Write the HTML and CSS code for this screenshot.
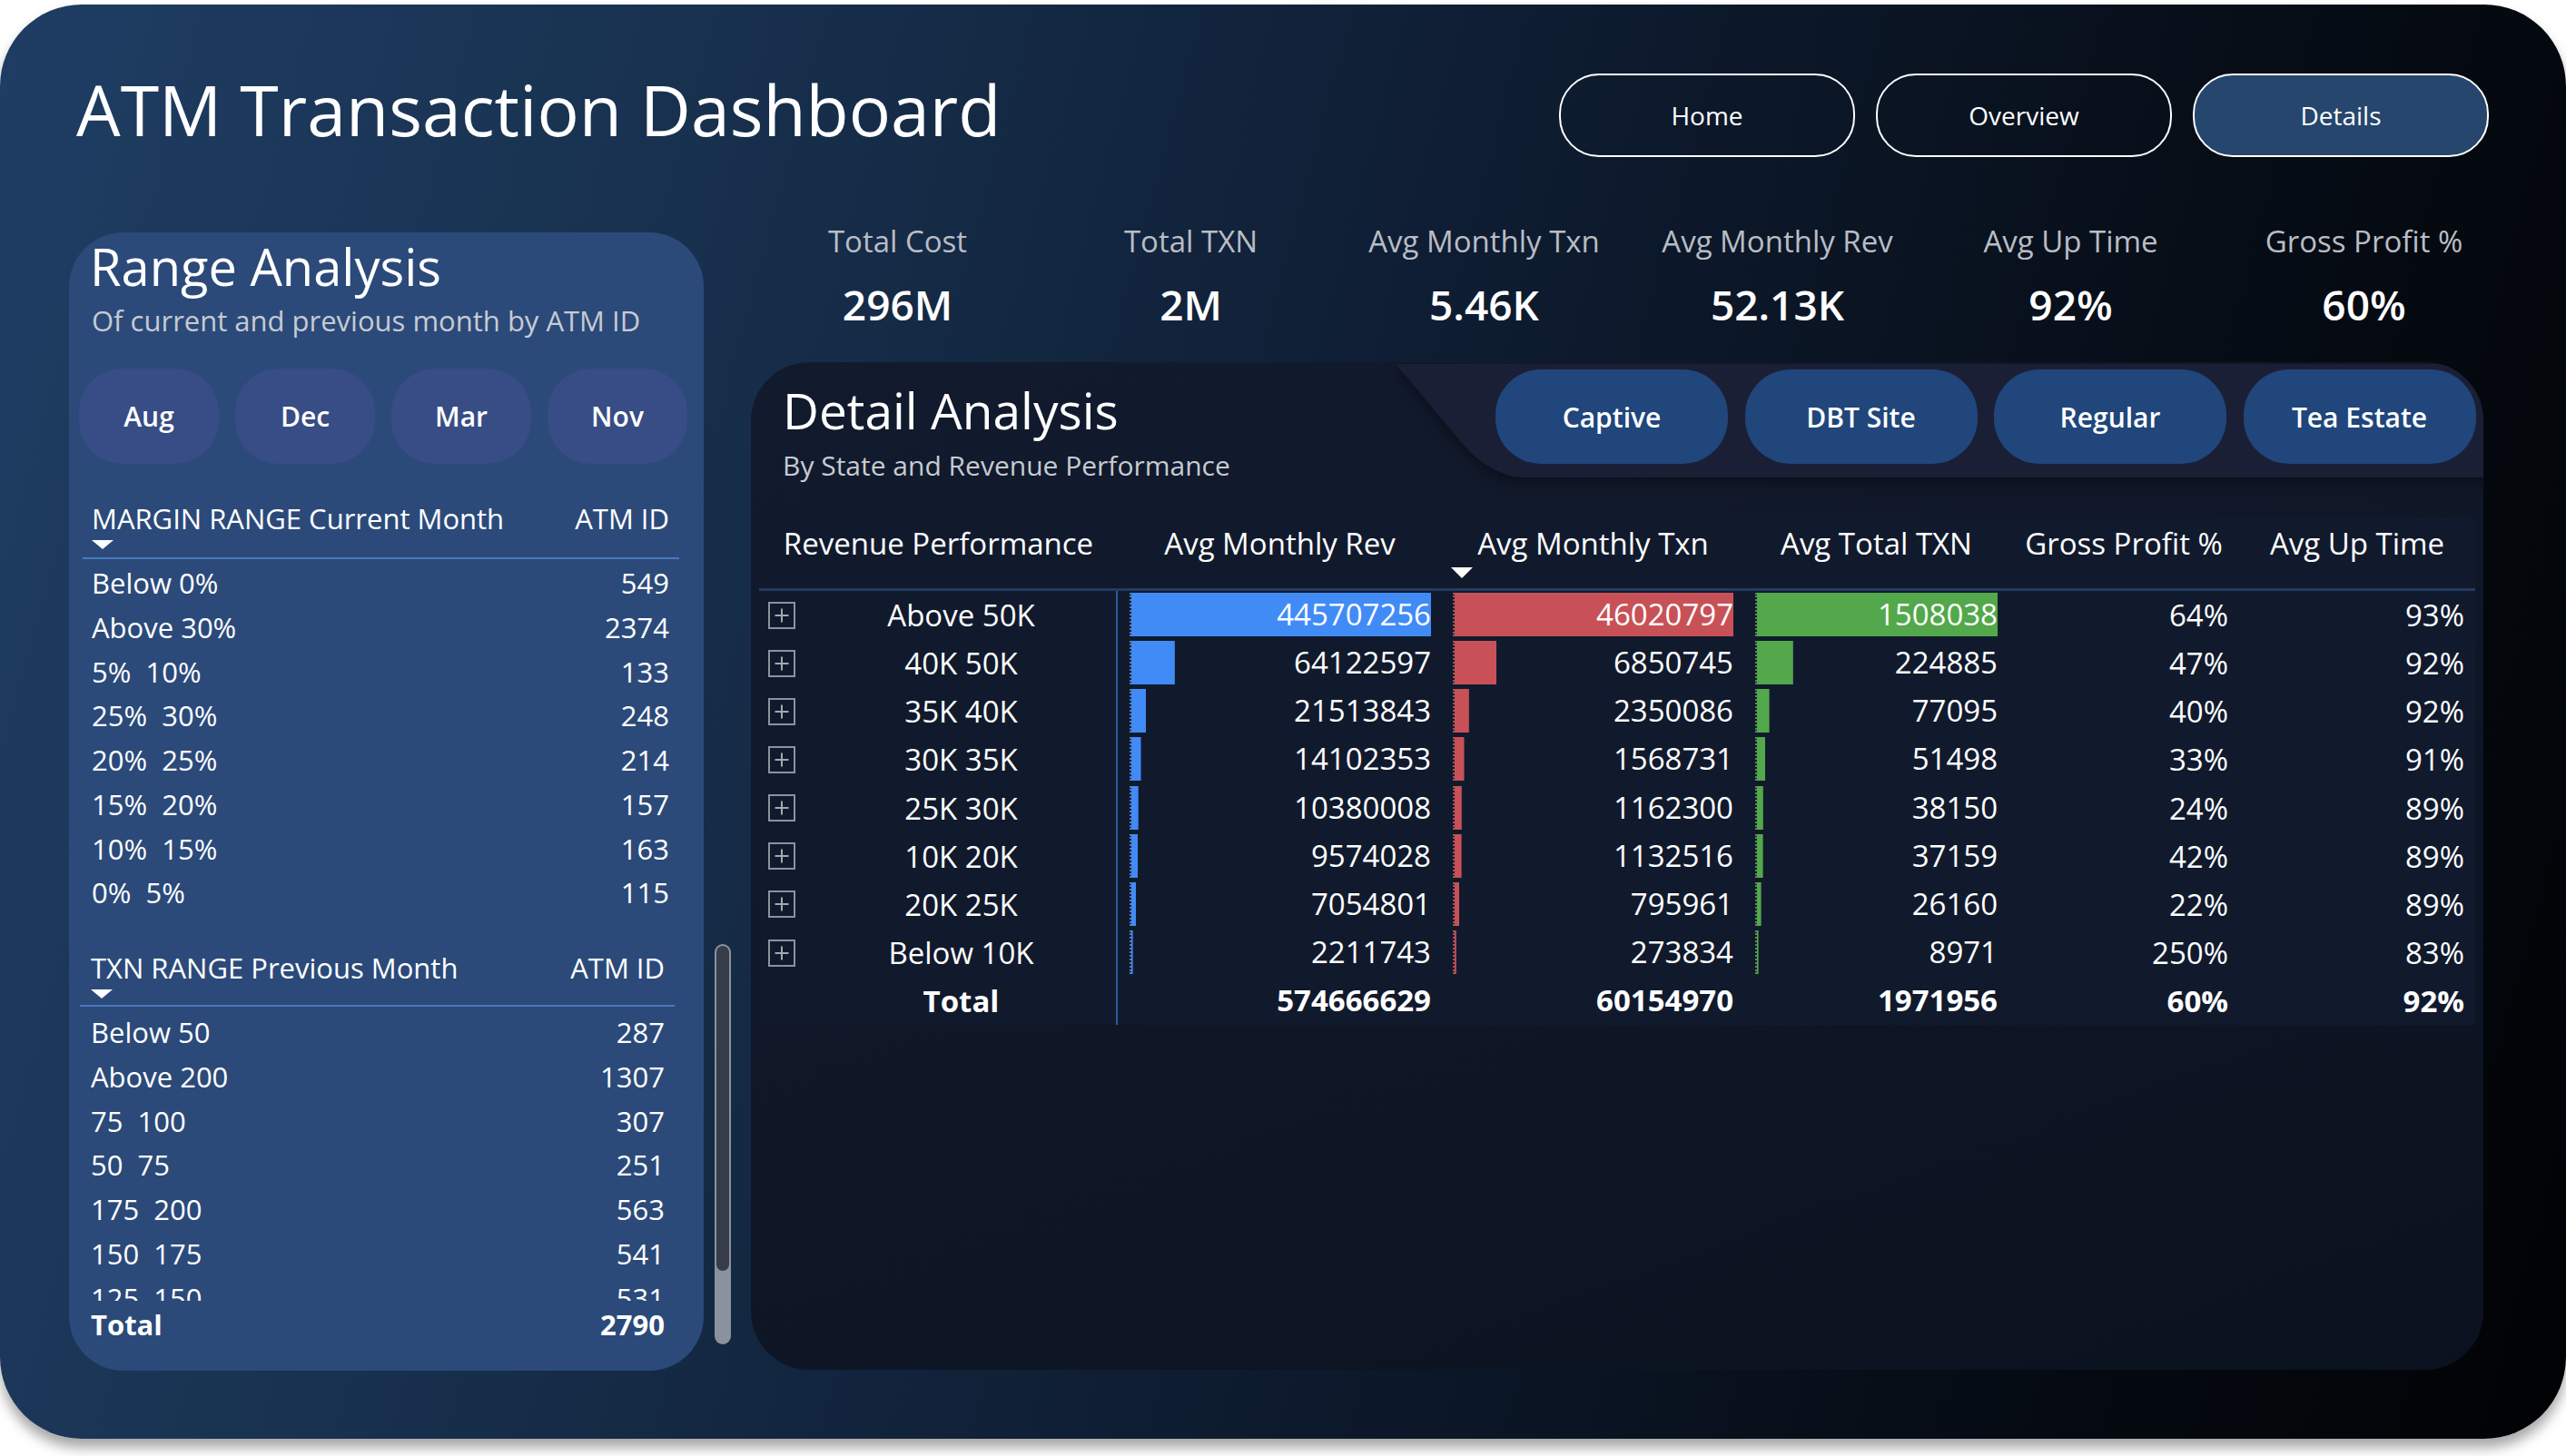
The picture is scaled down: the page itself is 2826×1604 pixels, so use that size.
FILE: index.html
```html
<!DOCTYPE html>
<html lang="en">
<head>
<meta charset="utf-8">
<title>ATM Transaction Dashboard</title>
<link rel="stylesheet" href="styles.css">
</head>
<body>
<div class="frame">
  <header class="top">
    <h1 class="title">ATM Transaction Dashboard</h1>
    <nav class="nav">
      <a class="nav-btn">Home</a>
      <a class="nav-btn">Overview</a>
      <a class="nav-btn active">Details</a>
    </nav>
  </header>

  <div class="body">
    <aside class="left-col">
      <section class="range">
        <h2 class="range-title">Range Analysis</h2>
        <p class="range-sub">Of current and previous month by ATM ID</p>
        <div class="months">
          <button class="month">Aug</button>
          <button class="month">Dec</button>
          <button class="month">Mar</button>
          <button class="month">Nov</button>
        </div>

        <div class="rt rt1">
          <div class="rt-head"><span>MARGIN RANGE Current Month</span><span>ATM ID</span></div>
          <div class="sort-arrow"></div>
          <div class="rt-line"></div>
          <div class="rt-rows">
            <div class="rt-row"><span>Below 0%</span><span>549</span></div>
            <div class="rt-row"><span>Above 30%</span><span>2374</span></div>
            <div class="rt-row"><span>5%  10%</span><span>133</span></div>
            <div class="rt-row"><span>25%  30%</span><span>248</span></div>
            <div class="rt-row"><span>20%  25%</span><span>214</span></div>
            <div class="rt-row"><span>15%  20%</span><span>157</span></div>
            <div class="rt-row"><span>10%  15%</span><span>163</span></div>
            <div class="rt-row"><span>0%  5%</span><span>115</span></div>
          </div>
        </div>

        <div class="rt rt2">
          <div class="rt-head"><span>TXN RANGE Previous Month</span><span>ATM ID</span></div>
          <div class="sort-arrow"></div>
          <div class="rt-line"></div>
          <div class="rt-rows clip">
            <div class="rt-row"><span>Below 50</span><span>287</span></div>
            <div class="rt-row"><span>Above 200</span><span>1307</span></div>
            <div class="rt-row"><span>75  100</span><span>307</span></div>
            <div class="rt-row"><span>50  75</span><span>251</span></div>
            <div class="rt-row"><span>175  200</span><span>563</span></div>
            <div class="rt-row"><span>150  175</span><span>541</span></div>
            <div class="rt-row"><span>125  150</span><span>531</span></div>
          </div>
          <div class="rt-row rt-total"><span>Total</span><span>2790</span></div>
        </div>
      </section>
      <div class="scroll"><div class="thumb"></div></div>
    </aside>

    <main class="right-col">
      <div class="kpis">
        <div class="kpi"><div class="kpi-label">Total Cost</div><div class="kpi-value">296M</div></div>
        <div class="kpi"><div class="kpi-label">Total TXN</div><div class="kpi-value">2M</div></div>
        <div class="kpi"><div class="kpi-label">Avg Monthly Txn</div><div class="kpi-value">5.46K</div></div>
        <div class="kpi"><div class="kpi-label">Avg Monthly Rev</div><div class="kpi-value">52.13K</div></div>
        <div class="kpi"><div class="kpi-label">Avg Up Time</div><div class="kpi-value">92%</div></div>
        <div class="kpi"><div class="kpi-label">Gross Profit %</div><div class="kpi-value">60%</div></div>
      </div>

      <section class="detail">
        <div class="detail-head">
          <div class="detail-text">
            <h2 class="detail-title">Detail Analysis</h2>
            <p class="detail-sub">By State and Revenue Performance</p>
          </div>
          <div class="slicer">
            <button class="chip">Captive</button>
            <button class="chip">DBT Site</button>
            <button class="chip">Regular</button>
            <button class="chip">Tea Estate</button>
          </div>
        </div>

        <div class="table">
          <div class="th">Revenue Performance</div>
          <div class="th">Avg Monthly Rev</div>
          <div class="th th-sort"><span>Avg Monthly Txn</span><i class="th-arrow"></i></div>
          <div class="th">Avg Total TXN</div>
          <div class="th">Gross Profit %</div>
          <div class="th">Avg Up Time</div>
          <div class="hline"></div>

          <div class="c1"><svg class="exp" width="30" height="30" viewBox="0 0 30 30"><rect x="1" y="1" width="28" height="28" fill="none" stroke="#8d929b" stroke-width="2"/><path d="M15 7.5v15M7.5 15h15" stroke="#a3a8b0" stroke-width="2"/></svg><span class="lbl">Above 50K</span></div>
          <div class="bc c2"><div class="bar blue" style="--w:332px">445707256</div></div>
          <div class="bc"><div class="bar red" style="--w:309px">46020797</div></div>
          <div class="bc"><div class="bar green" style="--w:267px">1508038</div></div>
          <div class="num">64%</div>
          <div class="num">93%</div>

          <div class="c1"><svg class="exp" width="30" height="30" viewBox="0 0 30 30"><rect x="1" y="1" width="28" height="28" fill="none" stroke="#8d929b" stroke-width="2"/><path d="M15 7.5v15M7.5 15h15" stroke="#a3a8b0" stroke-width="2"/></svg><span class="lbl">40K 50K</span></div>
          <div class="bc c2"><div class="bar blue" style="--w:47.8px">64122597</div></div>
          <div class="bc"><div class="bar red" style="--w:46px">6850745</div></div>
          <div class="bc"><div class="bar green" style="--w:39.8px">224885</div></div>
          <div class="num">47%</div>
          <div class="num">92%</div>

          <div class="c1"><svg class="exp" width="30" height="30" viewBox="0 0 30 30"><rect x="1" y="1" width="28" height="28" fill="none" stroke="#8d929b" stroke-width="2"/><path d="M15 7.5v15M7.5 15h15" stroke="#a3a8b0" stroke-width="2"/></svg><span class="lbl">35K 40K</span></div>
          <div class="bc c2"><div class="bar blue" style="--w:16px">21513843</div></div>
          <div class="bc"><div class="bar red" style="--w:15.8px">2350086</div></div>
          <div class="bc"><div class="bar green" style="--w:13.6px">77095</div></div>
          <div class="num">40%</div>
          <div class="num">92%</div>

          <div class="c1"><svg class="exp" width="30" height="30" viewBox="0 0 30 30"><rect x="1" y="1" width="28" height="28" fill="none" stroke="#8d929b" stroke-width="2"/><path d="M15 7.5v15M7.5 15h15" stroke="#a3a8b0" stroke-width="2"/></svg><span class="lbl">30K 35K</span></div>
          <div class="bc c2"><div class="bar blue" style="--w:10.5px">14102353</div></div>
          <div class="bc"><div class="bar red" style="--w:10.5px">1568731</div></div>
          <div class="bc"><div class="bar green" style="--w:9.1px">51498</div></div>
          <div class="num">33%</div>
          <div class="num">91%</div>

          <div class="c1"><svg class="exp" width="30" height="30" viewBox="0 0 30 30"><rect x="1" y="1" width="28" height="28" fill="none" stroke="#8d929b" stroke-width="2"/><path d="M15 7.5v15M7.5 15h15" stroke="#a3a8b0" stroke-width="2"/></svg><span class="lbl">25K 30K</span></div>
          <div class="bc c2"><div class="bar blue" style="--w:7.7px">10380008</div></div>
          <div class="bc"><div class="bar red" style="--w:7.8px">1162300</div></div>
          <div class="bc"><div class="bar green" style="--w:6.8px">38150</div></div>
          <div class="num">24%</div>
          <div class="num">89%</div>

          <div class="c1"><svg class="exp" width="30" height="30" viewBox="0 0 30 30"><rect x="1" y="1" width="28" height="28" fill="none" stroke="#8d929b" stroke-width="2"/><path d="M15 7.5v15M7.5 15h15" stroke="#a3a8b0" stroke-width="2"/></svg><span class="lbl">10K 20K</span></div>
          <div class="bc c2"><div class="bar blue" style="--w:7.1px">9574028</div></div>
          <div class="bc"><div class="bar red" style="--w:7.6px">1132516</div></div>
          <div class="bc"><div class="bar green" style="--w:6.6px">37159</div></div>
          <div class="num">42%</div>
          <div class="num">89%</div>

          <div class="c1"><svg class="exp" width="30" height="30" viewBox="0 0 30 30"><rect x="1" y="1" width="28" height="28" fill="none" stroke="#8d929b" stroke-width="2"/><path d="M15 7.5v15M7.5 15h15" stroke="#a3a8b0" stroke-width="2"/></svg><span class="lbl">20K 25K</span></div>
          <div class="bc c2"><div class="bar blue" style="--w:5.3px">7054801</div></div>
          <div class="bc"><div class="bar red" style="--w:5.3px">795961</div></div>
          <div class="bc"><div class="bar green" style="--w:4.6px">26160</div></div>
          <div class="num">22%</div>
          <div class="num">89%</div>

          <div class="c1"><svg class="exp" width="30" height="30" viewBox="0 0 30 30"><rect x="1" y="1" width="28" height="28" fill="none" stroke="#8d929b" stroke-width="2"/><path d="M15 7.5v15M7.5 15h15" stroke="#a3a8b0" stroke-width="2"/></svg><span class="lbl">Below 10K</span></div>
          <div class="bc c2"><div class="bar blue" style="--w:1.6px">2211743</div></div>
          <div class="bc"><div class="bar red" style="--w:1.8px">273834</div></div>
          <div class="bc"><div class="bar green" style="--w:1.6px">8971</div></div>
          <div class="num">250%</div>
          <div class="num">83%</div>

          <div class="c1 total"><span class="exp-space"></span><span class="lbl">Total</span></div>
          <div class="bc c2 total"><div class="bar none">574666629</div></div>
          <div class="bc total"><div class="bar none">60154970</div></div>
          <div class="bc total"><div class="bar none">1971956</div></div>
          <div class="num total">60%</div>
          <div class="num total">92%</div>
        </div>
      </section>
    </main>
  </div>
</div>
</body>
</html>
```

FILE: styles.css
```css
* { box-sizing: border-box; margin: 0; padding: 0; }
html, body { width: 2826px; height: 1604px; }
body {
  background: #ffffff;
  font-family: "Open Sans", "Noto Sans", sans-serif;
  color: #ffffff;
  overflow: hidden;
}
button { font-family: inherit; color: #fff; border: none; cursor: pointer; }

.frame {
  margin-top: 5px;
  height: 1580px;
  border-radius: 90px;
  padding: 0 91px 0 76px;
  background: linear-gradient(105deg, #1f3d64 0%, #18314f 24%, #0f1e34 50%, #070e18 76%, #010204 100%);
  box-shadow: 0 10px 14px rgba(0, 0, 0, 0.35);
}

/* header */
.top {
  height: 244px;
  display: flex;
  align-items: flex-start;
  justify-content: space-between;
  padding-top: 76px;
}
.title {
  font-size: 77px;
  font-weight: 400;
  line-height: 77px;
  margin: 1px 0 0 8px;
  white-space: nowrap;
}
.nav { display: flex; gap: 23px; margin-right: -6px; }
.nav-btn {
  width: 326px;
  height: 92px;
  border: 2px solid #ffffff;
  border-radius: 44px;
  display: flex;
  align-items: center;
  justify-content: center;
  font-size: 28px;
  color: #fff;
}
.nav-btn.active { background: #26466e; }

/* body */
.body { display: flex; }
.left-col {
  width: 729px;
  flex: none;
  display: flex;
  gap: 12px;
  margin-right: 22px;
}
.range {
  width: 699px;
  height: 1254px;
  margin-top: 7px;
  background: #2b4a7a;
  border-radius: 60px;
  flex: none;
}
.range-title {
  font-size: 56px;
  font-weight: 400;
  line-height: 56px;
  padding: 9px 0 0 23px;
}
.range-sub {
  font-size: 31px;
  line-height: 31px;
  color: #c7cbd3;
  margin: 17px 0 0 25px;
  white-space: nowrap;
}
.months {
  display: flex;
  gap: 18px;
  margin: 37px 0 0 11px;
}
.month {
  width: 154px;
  height: 105px;
  border-radius: 48px;
  background: #384c85;
  font-size: 30px;
  font-weight: 600;
}

.rt { padding: 0 38px 0 25px; }
.rt1 { margin-top: 42px; }
.rt2 { margin-top: 40px; padding: 0 43px 0 24px; }
.rt-head {
  display: flex;
  justify-content: space-between;
  font-size: 31px;
  line-height: 36px;
  white-space: nowrap;
}
.sort-arrow {
  width: 0;
  height: 0;
  border-left: 12px solid transparent;
  border-right: 12px solid transparent;
  border-top: 10px solid #ffffff;
  margin-top: 6px;
}
.rt-line {
  height: 2px;
  background: #4a79c1;
  margin: 9px -11px 0 -10px;
}
.rt2 .rt-line { margin: 7px -11px 0 -12px; }
.rt-rows { margin-top: 2px; }
.rt2 .rt-rows { margin-top: 4px; }
.rt-rows.clip { height: 320px; overflow: hidden; }
.rt-row {
  display: flex;
  justify-content: space-between;
  height: 48.75px;
  line-height: 48.75px;
  font-size: 31px;
  white-space: pre;
}
.rt-total { font-weight: 700; height: 48px; line-height: 48px; margin-top: 2px; }

.scroll {
  width: 18px;
  height: 441px;
  margin-top: 791px;
  background: #89929d;
  border-radius: 9px;
  padding: 2px;
  flex: none;
}
.thumb {
  height: 358px;
  background: #363d48;
  border-radius: 7px;
}

/* right column */
.right-col { width: 1908px; flex: none; }
.kpis {
  display: grid;
  grid-template-columns: repeat(6, 323px);
  margin-right: -30px;
}
.kpi { text-align: center; }
.kpi-label {
  font-size: 33px;
  line-height: 33px;
  color: #b9bdc5;
  white-space: nowrap;
}
.kpi-value {
  font-size: 46px;
  line-height: 46px;
  font-weight: 600;
  margin-top: 30px;
}

.detail {
  margin-top: 41px;
  height: 1110px;
  border-radius: 64px;
  background: linear-gradient(160deg, #121b2e 0%, #0f1727 50%, #0b121f 100%);
  overflow: hidden;
}
.detail-head { display: flex; height: 127px; }
.detail-text { padding: 25px 0 0 35px; }
.detail-title {
  font-size: 55px;
  font-weight: 400;
  line-height: 55px;
  white-space: nowrap;
}
.detail-sub {
  font-size: 30px;
  line-height: 30px;
  color: #c7cbd3;
  margin-top: 19px;
  white-space: nowrap;
}
.slicer {
  margin-left: auto;
  margin-top: 2px;
  width: 1198px;
  height: 125px;
  padding: 6px 9px 0 110px;
  display: flex;
  gap: 18.5px;
  position: relative;
  isolation: isolate;
  flex: none;
}
.slicer::before {
  content: "";
  position: absolute;
  left: 0;
  top: 0;
  width: calc(100% + 300px);
  height: 100%;
  background: #1b1f35;
  transform: skewX(40deg);
  transform-origin: 0 0;
  border-bottom-left-radius: 34px;
  box-shadow: -6px 6px 12px rgba(0, 0, 0, 0.35);
  z-index: -1;
}
.chip {
  width: 256px;
  height: 104px;
  border-radius: 50px;
  background: #20467b;
  font-size: 30px;
  font-weight: 600;
  flex: none;
}

/* matrix table */
.table {
  margin: 45px 9px 0;
  background: #111a2d;
  display: grid;
  grid-template-columns: 395px 357px 333px 291px 254px 260px;
}
.th {
  height: 77px;
  padding-top: 10px;
  line-height: 36px;
  font-size: 33px;
  text-align: center;
  white-space: nowrap;
}
.th-sort span { display: block; }
.th-arrow {
  display: block;
  width: 0;
  height: 0;
  margin: 8px 0 0 10px;
  border-left: 12px solid transparent;
  border-right: 12px solid transparent;
  border-top: 12px solid #ffffff;
}
.hline {
  grid-column: 1 / -1;
  height: 3px;
  background: #243a5e;
}
.c1 {
  display: flex;
  align-items: center;
  height: 53.15px;
  border-right: 2px solid #2f5a9a;
}
.exp { margin-left: 10px; flex: none; }
.exp-space { width: 40px; flex: none; }
.lbl {
  flex: 1;
  text-align: center;
  padding-left: 12px;
  font-size: 33px;
  white-space: nowrap;
}
.bc {
  height: 53.15px;
  padding: 2px 12px 3px 12px;
}
.bc.c2 { padding-left: 13px; }
.bar {
  height: 48px;
  line-height: 48px;
  text-align: right;
  font-size: 33px;
  border-left: 2px dotted rgba(150, 160, 180, 0.55);
  background-repeat: no-repeat;
  background-size: var(--w) 100%;
  white-space: nowrap;
}
.bar.blue { background-image: linear-gradient(#418bf6, #418bf6); border-left-color: rgba(120, 165, 240, 0.7); }
.bar.red { background-image: linear-gradient(#c85157, #c85157); border-left-color: rgba(210, 110, 115, 0.7); }
.bar.green { background-image: linear-gradient(#52a84a, #52a84a); border-left-color: rgba(110, 190, 100, 0.7); }
.bar.none { border-left-color: transparent; }
.num {
  height: 53.15px;
  line-height: 53.15px;
  text-align: right;
  padding-right: 12px;
  font-size: 33px;
}
.total { font-weight: 700; }
.total .lbl, .total .bar { font-weight: 700; }
```
